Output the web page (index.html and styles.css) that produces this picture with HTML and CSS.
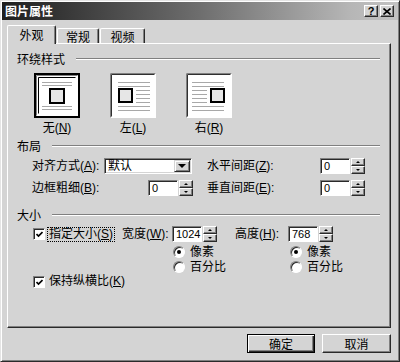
FILE: index.html
```html
<!DOCTYPE html>
<html lang="zh-CN">
<head>
<meta charset="utf-8">
<title>图片属性</title>
<link rel="stylesheet" href="styles.css">
</head>
<body>
<div class="dialog">
  <div class="titlebar">
    <span class="title">图片属性</span>
    <div class="tbtns">
      <span class="tbtn">?</span>
      <span class="tbtn"><svg width="8" height="7" viewBox="0 0 8 7"><path d="M0.5 0.5L7.5 6.5M7.5 0.5L0.5 6.5" stroke="#000" stroke-width="1.6" fill="none"/></svg></span>
    </div>
  </div>
  <div class="body">
    <div class="tabs">
      <div class="tab active">外观</div>
      <div class="tab t2">常规</div>
      <div class="tab t3">视频</div>
    </div>
    <div class="panel">
      <section class="group">
        <div class="ghead"><span>环绕样式</span><i class="etch"></i></div>
        <div class="wraps">
          <div class="wopt">
            <svg class="wicon" width="46" height="45" viewBox="0 0 46 45">
              <rect x="0" y="0" width="46" height="45" fill="#fff"/>
              <rect x="1" y="1" width="44" height="43" fill="none" stroke="#000" stroke-width="2"/>
              <path d="M2.5 42.5V2.5H43.5" stroke="#808080" fill="none"/>
              <path d="M4.5 40.5V4.5H41.5" stroke="#000" fill="none"/>
              <path d="M8 9.5H38M8 12.5H38M8 33.5H38M8 36.5H38" stroke="#a8a8a8"/>
              <rect x="16" y="16" width="14" height="14" fill="#e6e6e6" stroke="#000" stroke-width="2"/>
            </svg>
            <span class="wlabel">无(<u>N</u>)</span>
          </div>
          <div class="wopt">
            <svg class="wicon" width="46" height="45" viewBox="0 0 46 45">
              <rect x="0" y="0" width="46" height="45" fill="#fff"/>
              <path d="M0.5 44.5V0.5H45.5" stroke="#808080" fill="none"/>
              <path d="M1.5 43.5V1.5H44.5" stroke="#303030" fill="none"/>
              <path d="M8 9.5H40M8 13.5H40M26 17.5H40M26 21.5H40M26 25.5H40M26 29.5H40M8 33.5H40M8 37.5H40" stroke="#a8a8a8"/>
              <rect x="9" y="16" width="13" height="13" fill="#e6e6e6" stroke="#000" stroke-width="2"/>
            </svg>
            <span class="wlabel">左(<u>L</u>)</span>
          </div>
          <div class="wopt">
            <svg class="wicon" width="46" height="45" viewBox="0 0 46 45">
              <rect x="0" y="0" width="46" height="45" fill="#fff"/>
              <path d="M0.5 44.5V0.5H45.5" stroke="#808080" fill="none"/>
              <path d="M1.5 43.5V1.5H44.5" stroke="#303030" fill="none"/>
              <path d="M6 9.5H38M6 13.5H38M6 17.5H21M6 21.5H21M6 25.5H21M6 29.5H21M6 33.5H38M6 37.5H38" stroke="#a8a8a8"/>
              <rect x="25" y="16" width="13" height="13" fill="#e6e6e6" stroke="#000" stroke-width="2"/>
            </svg>
            <span class="wlabel">右(<u>R</u>)</span>
          </div>
        </div>
      </section>

      <section class="group g2">
        <div class="ghead"><span>布局</span><i class="etch"></i></div>
        <div class="lgrid">
          <span class="lbl">对齐方式(<u>A</u>):</span>
          <div class="select"><span class="sval">默认</span><span class="dropbtn"><i class="tri-down"></i></span></div>
          <span class="lbl pl">水平间距(<u>Z</u>):</span>
          <div class="spin"><span class="field">0</span><span class="arrows"><span class="ab"><i class="up"></i></span><span class="ab"><i class="dn"></i></span></span></div>

          <span class="lbl">边框粗细(<u>B</u>):</span>
          <div class="spin end"><span class="field">0</span><span class="arrows"><span class="ab"><i class="up"></i></span><span class="ab"><i class="dn"></i></span></span></div>
          <span class="lbl pl">垂直间距(<u>E</u>):</span>
          <div class="spin"><span class="field">0</span><span class="arrows"><span class="ab"><i class="up"></i></span><span class="ab"><i class="dn"></i></span></span></div>
        </div>
      </section>

      <section class="group g3">
        <div class="ghead"><span>大小</span><i class="etch"></i></div>
        <div class="sgrid">
          <label class="chk"><span class="box"><svg width="7" height="7" viewBox="0 0 7 7"><path d="M0.5 3L2.5 5L6.5 1" stroke="#000" stroke-width="1.7" fill="none"/></svg></span><span class="ctext focus">指定大小(<u>S</u>)</span></label>
          <span class="lbl">宽度(<u>W</u>):</span>
          <div class="spin"><span class="field">1024</span><span class="arrows"><span class="ab"><i class="up"></i></span><span class="ab"><i class="dn"></i></span></span></div>
          <span class="lbl">高度(<u>H</u>):</span>
          <div class="spin"><span class="field">768</span><span class="arrows"><span class="ab"><i class="up"></i></span><span class="ab"><i class="dn"></i></span></span></div>

          <label class="rad c3 r2"><span class="radio on"></span><span>像素</span></label>
          <label class="rad c5 r2"><span class="radio on"></span><span>像素</span></label>
          <label class="rad c3 r3"><span class="radio"></span><span>百分比</span></label>
          <label class="rad c5 r3"><span class="radio"></span><span>百分比</span></label>

          <label class="chk r4"><span class="box"><svg width="7" height="7" viewBox="0 0 7 7"><path d="M0.5 3L2.5 5L6.5 1" stroke="#000" stroke-width="1.7" fill="none"/></svg></span><span class="ctext">保持纵横比(<u>K</u>)</span></label>
        </div>
      </section>
    </div>
    <div class="buttons">
      <button class="btn default">确定</button>
      <button class="btn">取消</button>
    </div>
  </div>
</div>
</body>
</html>
```
FILE: styles.css
```css
* { box-sizing: border-box; margin: 0; padding: 0; }
html, body { width: 400px; height: 362px; overflow: hidden; background: #d4d4d4; }
body {
  font-family: "Liberation Sans", "Noto Sans CJK SC", sans-serif;
  font-size: 12px;
  line-height: 14px;
  color: #000;
}
u { text-decoration: underline; }

.dialog {
  width: 400px;
  height: 362px;
  background: #d4d4d4;
  border: 1px solid;
  border-color: #e4e4e4 #2a2a2a #2a2a2a #e4e4e4;
  box-shadow: inset 1px 1px #fff, inset -1px -1px #808080;
  padding: 1px;
  display: flex;
  flex-direction: column;
}

.titlebar {
  height: 18px;
  flex: 0 0 18px;
  display: flex;
  align-items: center;
  justify-content: space-between;
  padding: 0 4px 0 3px;
  background: linear-gradient(to right, #1e1e1e, #6e6e6e 50%, #b6b6b6 88%, #c2c2c2);
}
.title { color: #fff; font-weight: bold; font-size: 12px; font-family: "Noto Sans CJK SC", sans-serif; }
.tbtns { display: flex; gap: 2px; }
.tbtn {
  width: 14px;
  height: 12px;
  background: #d4d4d4;
  border: 1px solid;
  border-color: #fff #2a2a2a #2a2a2a #fff;
  box-shadow: inset -1px -1px #808080;
  display: flex;
  align-items: center;
  justify-content: center;
  font: bold 11px/10px "Liberation Sans", sans-serif;
}

.body { flex: 1; padding: 5px 7px 0 5px; display: flex; flex-direction: column; }

.tabs { height: 18px; flex: 0 0 18px; display: flex; align-items: flex-end; }
.tab {
  height: 15px;
  border: 1px solid;
  border-bottom: none;
  border-color: #fff #2a2a2a #fff #fff;
  box-shadow: inset -1px 0 #808080;
  border-radius: 2px 2px 0 0;
  padding-top: 1px;
  text-align: center;
  font-family: "Noto Sans CJK SC", sans-serif;
  line-height: 13px;
  background: #d4d4d4;
}
.tab.active {
  width: 49px;
  height: 19px;
  margin-bottom: -1px;
  padding-top: 2px;
  line-height: 14px;
  position: relative;
  z-index: 1;
}
.tab.t2 { width: 42px; margin-left: 1px; }
.tab.t3 { width: 45px; margin-left: 1px; }

.panel {
  height: 285px;
  flex: 0 0 285px;
  border: 1px solid;
  border-color: #fff #2a2a2a #2a2a2a #fff;
  box-shadow: inset -1px -1px #808080;
  padding: 8px 10px 0 9px;
  display: flex;
  flex-direction: column;
}

.ghead { display: flex; align-items: center; height: 14px; font-family: "Noto Sans CJK SC", sans-serif; }
.etch { flex: 1; height: 2px; margin-left: 11px; border-top: 1px solid #808080; border-bottom: 1px solid #fff; }

.wraps { display: flex; margin-top: 7px; padding-left: 2px; }
.wopt { width: 76px; display: flex; flex-direction: column; align-items: center; }
.wicon { display: block; }
.wlabel { margin-top: 3px; line-height: 14px; }

.g2 { margin-top: 4px; }
.lgrid {
  margin-top: 5px;
  padding-left: 15px;
  display: grid;
  grid-template-columns: 72px 89px 127px 45px;
  grid-template-rows: 16px 16px;
  row-gap: 6px;
  align-items: center;
}
.lbl { white-space: nowrap; }
.pl { padding-left: 14px; }

.select {
  width: 88px;
  height: 16px;
  background: #fff;
  border: 1px solid;
  border-color: #808080 #fff #fff #808080;
  box-shadow: inset 1px 1px #2a2a2a, inset -1px -1px #d4d4d4;
  display: flex;
  align-items: center;
  justify-content: space-between;
  padding: 1px;
}
.sval { padding-left: 2px; line-height: 12px; }
.dropbtn {
  width: 16px;
  height: 12px;
  background: #d4d4d4;
  border: 1px solid;
  border-color: #d4d4d4 #2a2a2a #2a2a2a #d4d4d4;
  box-shadow: inset 1px 1px #fff, inset -1px -1px #808080;
  display: flex;
  align-items: center;
  justify-content: center;
}
.tri-down { display: block; width: 0; height: 0; border-left: 4px solid transparent; border-right: 4px solid transparent; border-top: 4px solid #000; }

.spin { display: flex; height: 16px; }
.spin.end { justify-self: end; }
.field {
  width: 30px;
  height: 16px;
  background: #fff;
  border: 1px solid;
  border-color: #808080 #fff #fff #808080;
  box-shadow: inset 1px 1px #2a2a2a;
  padding-left: 3px;
  line-height: 14px;
  font-size: 11px;
}
.arrows { width: 15px; height: 16px; display: flex; flex-direction: column; padding-left: 1px; }
.ab {
  flex: 1;
  background: #d4d4d4;
  border: 1px solid;
  border-color: #fff #2a2a2a #2a2a2a #fff;
  box-shadow: inset -1px -1px #808080;
  display: flex;
  align-items: center;
  justify-content: center;
}
.up { display: block; width: 0; height: 0; border-left: 2px solid transparent; border-right: 2px solid transparent; border-bottom: 2px solid #000; }
.dn { display: block; width: 0; height: 0; border-left: 2px solid transparent; border-right: 2px solid transparent; border-top: 2px solid #000; }

.g3 { margin-top: 12px; }
.sgrid {
  margin-top: 4px;
  padding-left: 16px;
  display: grid;
  grid-template-columns: 89px 50px 63px 53px 60px;
  grid-template-rows: 16px 17px 15px 15px;
  align-items: center;
}
.chk { display: flex; align-items: center; white-space: nowrap; }
.box {
  width: 12px;
  height: 12px;
  background: #fff;
  border: 1px solid;
  border-color: #808080 #fff #fff #808080;
  box-shadow: inset 1px 1px #2a2a2a;
  display: flex;
  align-items: center;
  justify-content: center;
  padding: 1px 0 0 1px;
}
.ctext { margin-left: 3px; padding: 0 1px; line-height: 13px; }
.focus { outline: 1px dotted #000; }
.r4 { grid-column: 1 / span 3; grid-row: 4; }

.rad { display: flex; align-items: center; white-space: nowrap; gap: 5px; }
.c3 { grid-column: 3; margin-left: 1px; }
.c5 { grid-column: 5; margin-left: 2px; }
.r2 { grid-row: 2; align-self: end; }
.r3 { grid-row: 3; }
.radio {
  width: 12px;
  height: 12px;
  border-radius: 50%;
  background: #fff;
  border: 1px solid;
  border-color: #808080 #fff #fff #808080;
  box-shadow: inset 1px 1px #2a2a2a;
  display: flex;
  align-items: center;
  justify-content: center;
}
.radio.on::after { content: ""; display: block; width: 4px; height: 4px; border-radius: 50%; background: #000; }

.buttons { margin-top: 6px; display: flex; justify-content: flex-end; gap: 7px; }
.btn {
  width: 69px;
  height: 19px;
  background: #d4d4d4;
  border: 1px solid;
  border-color: #fff #2a2a2a #2a2a2a #fff;
  box-shadow: inset -1px -1px #808080;
  font-family: "Noto Sans CJK SC", sans-serif;
  font-size: 12px;
  line-height: 15px;
  color: #000;
}
.btn.default {
  width: 68px;
  border: 1px solid #000;
  box-shadow: inset 1px 1px #fff, inset -1px -1px #2a2a2a, inset -2px -2px #808080;
}
```
